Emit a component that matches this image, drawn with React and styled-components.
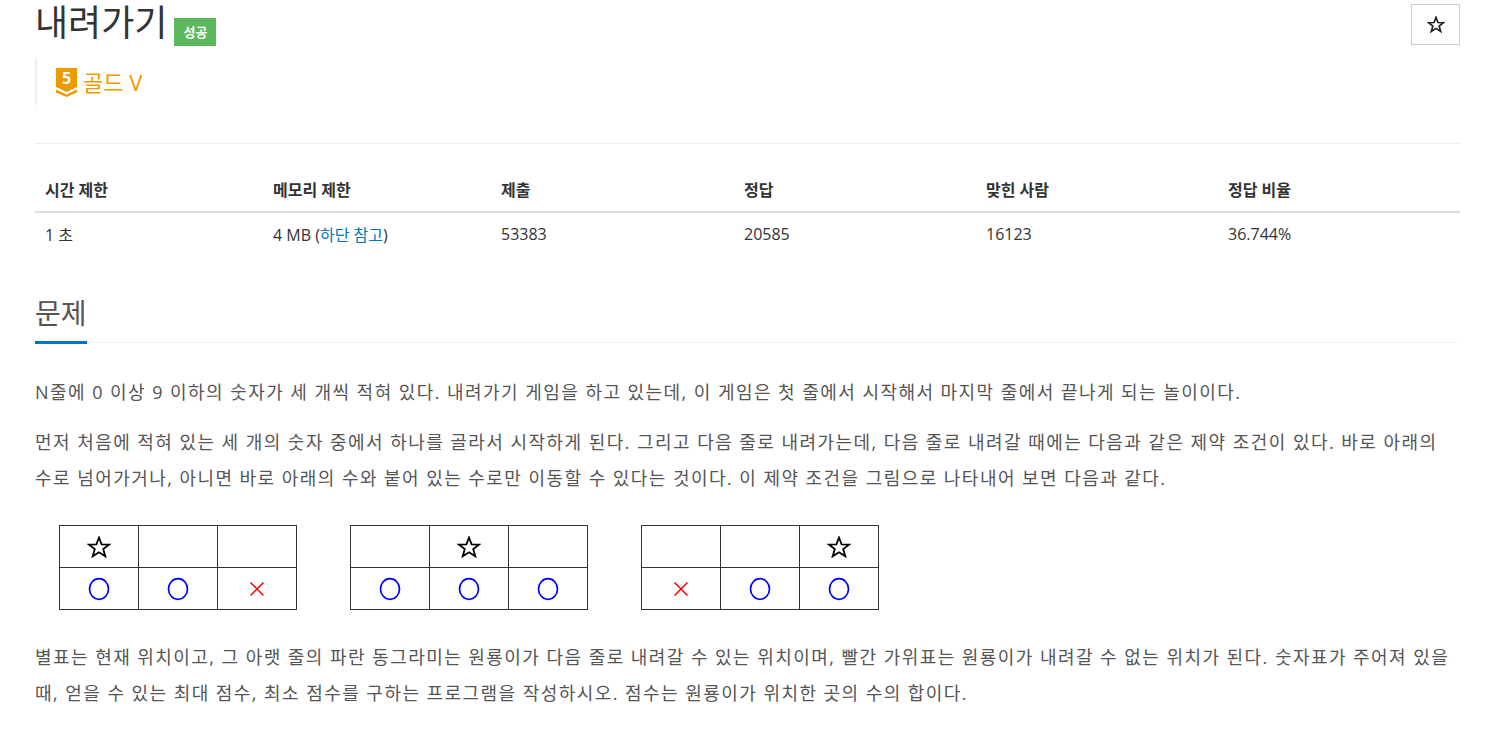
import React from "react";
import styled, { createGlobalStyle } from "styled-components";

const GlobalStyle = createGlobalStyle`
  body {
    margin: 0;
    background: #fff;
    font-family: "Open Sans", "Noto Sans CJK KR", sans-serif;
    color: #333;
  }
`;

const Page = styled.div`
  padding: 0 25px 0 35px;
`;

const Header = styled.div`
  display: flex;
  justify-content: space-between;
  align-items: flex-start;
`;

const Title = styled.h1`
  margin: 0;
  padding-top: 0;
  font-size: 36px;
  font-weight: 400;
  line-height: 46px;
  color: #333;
  display: flex;
  align-items: flex-start;
  gap: 7px;
`;

const Badge = styled.span`
  display: inline-flex;
  align-items: center;
  justify-content: center;
  height: 28px;
  padding: 0 9px;
  margin-top: 18px;
  background: #5cb85c;
  color: #fff;
  font-size: 13px;
  font-weight: 600;
  line-height: 1;
`;

const StarButton = styled.button`
  margin-top: 4px;
  width: 49px;
  height: 41px;
  border: 1px solid #ccc;
  background: #fff;
  display: flex;
  align-items: center;
  justify-content: center;
  padding: 0;
`;

const TierBox = styled.div`
  margin-top: 13px;
  height: 46px;
  border-left: 2px solid #eee;
  padding-left: 19px;
  display: flex;
  align-items: center;
  gap: 6px;
`;

const TierText = styled.span`
  color: #ec9a00;
  font-size: 22px;
  line-height: 1;
`;

const Divider = styled.hr`
  margin: 38px 0 22px;
  border: 0;
  border-top: 1px solid #eee;
`;

const StatsTable = styled.table`
  width: 100%;
  border-collapse: collapse;
  table-layout: fixed;
  font-size: 16px;
`;

const Th = styled.th`
  text-align: left;
  font-weight: 700;
  padding: 0 10px;
  height: 45px;
  border-bottom: 2px solid #ddd;
  color: #333;
`;

const Td = styled.td`
  padding: 0 10px;
  height: 42px;
  color: #333;
`;

const Link = styled.a`
  color: #0076c0;
  text-decoration: none;
`;

const Headline = styled.div`
  margin-top: 36px;
  border-bottom: 1px dotted #e4e9f0;
  display: flex;
`;

const H2 = styled.h2`
  margin: 0 0 -2px;
  font-size: 28px;
  font-weight: 400;
  line-height: 44px;
  color: #555;
  border-bottom: 3px solid #0076c0;
  padding-bottom: 6px;
`;

const Description = styled.div`
  padding: 31px 6px 0 0;
  font-size: 18px;
  line-height: 36px;
  letter-spacing: 1.45px;
  color: #555;
`;

const P = styled.p`
  margin: 0 0 14px;
`;

const Diagrams = styled.div`
  display: flex;
  gap: 53px;
  padding: 15px 0 0 24px;
  margin-bottom: 29px;
`;

const Board = styled.div`
  display: grid;
  grid-template-columns: repeat(3, 79px);
  grid-template-rows: 42px 42px;
  border-top: 1.5px solid #333;
  border-left: 1.5px solid #333;
`;

const Cell = styled.div`
  border-right: 1.5px solid #333;
  border-bottom: 1.5px solid #333;
  display: flex;
  align-items: center;
  justify-content: center;
`;

const starPath =
  "M12 1.5 L14.6 8.3 L22 8.6 L16.2 13.1 L18.3 20.3 L12 16.2 L5.7 20.3 L7.8 13.1 L2 8.6 L9.4 8.3 Z";

const StarMark = () => (
  <svg width="24" height="22" viewBox="0 0 24 22">
    <path d={starPath} fill="none" stroke="#000" strokeWidth="1.8" strokeLinejoin="miter" />
  </svg>
);

const CircleMark = () => (
  <svg width="22" height="24" viewBox="0 0 22 24">
    <ellipse cx="11" cy="12" rx="9.5" ry="10.3" fill="none" stroke="#0000ff" strokeWidth="1.7" />
  </svg>
);

const CrossMark = () => (
  <svg width="16" height="16" viewBox="0 0 16 16">
    <path d="M1.5 1.5 L14.5 14.5 M14.5 1.5 L1.5 14.5" stroke="#ff0000" strokeWidth="1.5" />
  </svg>
);

const Mark = ({ type }) => {
  if (type === "star") return <StarMark />;
  if (type === "o") return <CircleMark />;
  if (type === "x") return <CrossMark />;
  return null;
};

const boards = [
  [["star", "", ""], ["o", "o", "x"]],
  [["", "star", ""], ["o", "o", "o"]],
  [["", "", "star"], ["x", "o", "o"]],
];

const TierIcon = () => (
  <svg width="21" height="29" viewBox="0 0 21 29">
    <path d="M0 0 H21 V19 L10.5 24 L0 19 Z" fill="#ec9a00" />
    <path d="M0 21.5 L10.5 26.5 L21 21.5 V24.5 L10.5 29 L0 24.5 Z" fill="#ec9a00" />
    <text
      x="10.5"
      y="16"
      textAnchor="middle"
      fontFamily="Open Sans, sans-serif"
      fontWeight="700"
      fontSize="16"
      fill="#fff"
    >
      5
    </text>
  </svg>
);

const stats = [
  ["시간 제한", "1 초"],
  ["메모리 제한", null],
  ["제출", "53383"],
  ["정답", "20585"],
  ["맞힌 사람", "16123"],
  ["정답 비율", "36.744%"],
];

const widths = [228, 228, 243, 242, 242, 242];

export default function App() {
  return (
    <>
      <GlobalStyle />
      <Page>
        <Header>
          <div>
            <Title>
              <span>내려가기</span>
              <Badge>성공</Badge>
            </Title>
            <TierBox>
              <TierIcon />
              <TierText>골드 V</TierText>
            </TierBox>
          </div>
          <StarButton aria-label="favorite">
            <svg width="18" height="17" viewBox="0 0 24 22">
              <path d={starPath} fill="none" stroke="#222" strokeWidth="2.2" />
            </svg>
          </StarButton>
        </Header>

        <Divider />

        <StatsTable>
          <colgroup>
            {widths.map((w, i) => (
              <col key={i} style={{ width: w }} />
            ))}
          </colgroup>
          <thead>
            <tr>
              {stats.map(([h]) => (
                <Th key={h}>{h}</Th>
              ))}
            </tr>
          </thead>
          <tbody>
            <tr>
              {stats.map(([h, v]) => (
                <Td key={h}>
                  {v === null ? (
                    <>
                      4 MB (<Link href="#limit">하단 참고</Link>)
                    </>
                  ) : (
                    v
                  )}
                </Td>
              ))}
            </tr>
          </tbody>
        </StatsTable>

        <Headline>
          <H2>문제</H2>
        </Headline>

        <Description>
          <P>
            N줄에 0 이상 9 이하의 숫자가 세 개씩 적혀 있다. 내려가기 게임을 하고 있는데, 이 게임은 첫 줄에서 시작해서 마지막 줄에서 끝나게 되는 놀이이다.
          </P>
          <P>
            먼저 처음에 적혀 있는 세 개의 숫자 중에서 하나를 골라서 시작하게 된다. 그리고 다음 줄로 내려가는데, 다음 줄로 내려갈 때에는 다음과 같은 제약 조건이 있다. 바로 아래의 수로 넘어가거나, 아니면 바로 아래의 수와 붙어 있는 수로만 이동할 수 있다는 것이다. 이 제약 조건을 그림으로 나타내어 보면 다음과 같다.
          </P>
          <Diagrams>
            {boards.map((b, bi) => (
              <Board key={bi}>
                {b.flat().map((m, ci) => (
                  <Cell key={ci}>
                    <Mark type={m} />
                  </Cell>
                ))}
              </Board>
            ))}
          </Diagrams>
          <P>
            별표는 현재 위치이고, 그 아랫 줄의 파란 동그라미는 원룡이가 다음 줄로 내려갈 수 있는 위치이며, 빨간 가위표는 원룡이가 내려갈 수 없는 위치가 된다. 숫자표가 주어져 있을 때, 얻을 수 있는 최대 점수, 최소 점수를 구하는 프로그램을 작성하시오. 점수는 원룡이가 위치한 곳의 수의 합이다.
          </P>
        </Description>
      </Page>
    </>
  );
}
